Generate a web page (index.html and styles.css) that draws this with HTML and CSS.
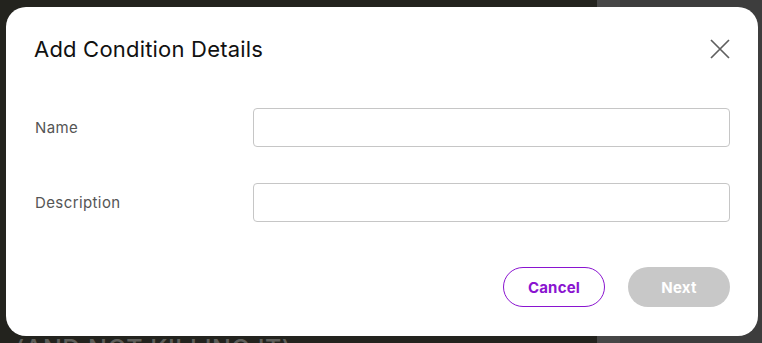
FILE: index.html
```html
<!DOCTYPE html>
<html>
<head>
<meta charset="utf-8">
<link rel="stylesheet" href="styles.css">
</head>
<body>
<div class="backdrop">
  <div class="bg-left"></div>
  <div class="bg-strip"></div>
  <div class="bg-right"></div>
  <div class="bg-text">(AND NOT KILLING IT)</div>
</div>
<div class="dialog">
  <div class="header">
    <h1 class="title">Add Condition Details</h1>
    <button class="close" aria-label="Close">
      <svg width="20" height="20" viewBox="0 0 20 20"><path d="M1 1 L19 19 M19 1 L1 19" stroke="#5f5f5f" stroke-width="1.7" fill="none"/></svg>
    </button>
  </div>
  <div class="form">
    <div class="row">
      <label class="label">Name</label>
      <input class="input" type="text">
    </div>
    <div class="row">
      <label class="label">Description</label>
      <input class="input" type="text">
    </div>
  </div>
  <div class="actions">
    <button class="btn btn-cancel">Cancel</button>
    <button class="btn btn-next">Next</button>
  </div>
</div>
</body>
</html>
```
FILE: styles.css
```css
* { box-sizing: border-box; }
html, body { margin: 0; padding: 0; width: 762px; height: 343px; overflow: hidden; }
body { font-family: Inter, "Liberation Sans", sans-serif; background: #23231e; position: relative; }
.backdrop { display: flex; height: 343px; position: relative; }
.bg-left { width: 597px; background: #23231e; }
.bg-strip { width: 23px; background: #474747; }
.bg-right { flex: 1; background: #3d3d3d; }
.bg-text { position: absolute; left: 15px; top: 334px; font-size: 25px; line-height: 30px; color: #5e5e5a; letter-spacing: 0.5px; font-weight: 500; }
.dialog {
  position: absolute; left: 6px; top: 7px; width: 752px; height: 329px;
  background: #fff; border-radius: 20px;
  padding: 28px 28px 0 28px;
  display: flex; flex-direction: column;
}
.header { display: flex; align-items: center; justify-content: space-between; height: 28px; }
.title { margin: 0; font-size: 22px; font-weight: 400; color: #111; letter-spacing: 0.2px; }
.close { border: none; background: none; padding: 0; width: 20px; height: 20px; display: flex; }
.form { margin-top: 45px; display: flex; flex-direction: column; gap: 36px; }
.row { display: flex; align-items: center; }
.label { width: 219px; padding-left: 1px; font-size: 15px; color: #555; letter-spacing: 0.4px; }
.input { width: 477px; height: 39px; border: 1px solid #c6c6c6; border-radius: 4px; outline: none; }
.actions { margin-top: 45px; display: flex; justify-content: flex-end; gap: 23px; }
.btn { width: 102px; height: 40px; border-radius: 20px; font-family: inherit; font-size: 15px; font-weight: 700; letter-spacing: 0.2px; }
.btn-cancel { background: #fff; border: 1px solid #8a14d0; color: #8a14d0; }
.btn-next { background: #c8c8c8; border: none; color: #fff; }
```
